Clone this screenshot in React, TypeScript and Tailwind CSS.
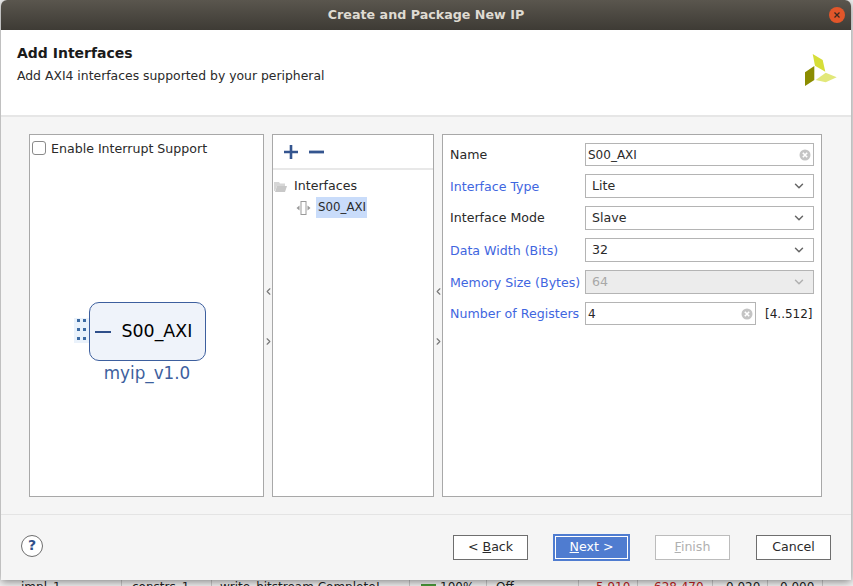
import React from 'react';
import { ChevronDown, ChevronLeft, ChevronRight } from 'lucide-react';

const font = { fontFamily: '"DejaVu Sans", sans-serif' };

function ClearIcon() {
  return (
    <svg width="12" height="12" viewBox="0 0 12 12" className="shrink-0">
      <circle cx="6" cy="6" r="5.5" fill="#c4c4c4" />
      <path d="M3.8 3.8l4.4 4.4M8.2 3.8l-4.4 4.4" stroke="#fff" strokeWidth="1.6" />
    </svg>
  );
}

function Logo() {
  return (
    <svg width="32" height="32" viewBox="0 0 32 32">
      <polygon points="7.7,0 17.7,6 20.3,17.7 10,11.7" fill="#d6de38" />
      <polygon points="9.3,12 9.3,26 0,32 0,18.3" fill="#8b8c00" />
      <polygon points="20.7,18.7 31.7,23.3 20.7,28.3 10.7,26" fill="#e2e87a" />
    </svg>
  );
}

function TextRow({ label, value, blue, narrow }: { label: string; value: string; blue?: boolean; narrow?: boolean }) {
  return (
    <div className="flex items-center h-[23px]">
      <span className={`w-[142px] pl-[7px] pt-[2px] whitespace-nowrap ${blue ? 'text-[#3f66e0]' : 'text-[#2a2a2a]'}`}>{label}</span>
      <div className={`h-[23px] flex items-center justify-between bg-white border border-[#b4b4b4] pl-[2px] pr-[2px] ${narrow ? 'w-[171px]' : 'w-[229px]'}`}>
        <span className="text-[12px]">{value}</span>
        <ClearIcon />
      </div>
      {narrow && <span className="ml-[9px] text-[12px] text-[#222]">[4..512]</span>}
    </div>
  );
}

function SelectRow({ label, value, blue, disabled }: { label: string; value: string; blue?: boolean; disabled?: boolean }) {
  return (
    <div className="flex items-center h-[24px]">
      <span className={`w-[142px] pl-[7px] whitespace-nowrap ${blue ? 'text-[#3f66e0] pt-[2px]' : 'text-[#2a2a2a]'}`}>{label}</span>
      <div className={`w-[229px] h-[24px] flex items-center justify-between border border-[#b4b4b4] pl-[6px] pr-[7px] ${disabled ? 'bg-[#ececec] text-[#a8a8a8]' : 'bg-white'}`}>
        <span>{value}</span>
        <ChevronDown size={14} strokeWidth={2.5} className={disabled ? 'text-[#b0b0b0]' : 'text-[#666]'} />
      </div>
    </div>
  );
}

function FooterButton({ children, kind }: { children: React.ReactNode; kind?: 'primary' | 'disabled' }) {
  if (kind === 'primary') {
    return (
      <div className="w-[77px] h-[27px] border-2 border-[#4f7cd0] bg-[#4f7cd0] flex items-center">
        <div className="w-full h-[23px] border border-white text-white flex items-center justify-center">{children}</div>
      </div>
    );
  }
  return (
    <div className={`w-[75px] h-[25px] bg-white border flex items-center justify-center ${kind === 'disabled' ? 'border-[#bcbcbc] text-[#b0b0b0]' : 'border-[#6e6e6e] text-[#2a2a2a]'}`}>
      {children}
    </div>
  );
}

function Splitter() {
  return (
    <div className="w-[8px] flex flex-col items-center shrink-0 text-[#777]">
      <ChevronLeft size={11} strokeWidth={2.5} className="mt-[152px] shrink-0" />
      <ChevronRight size={11} strokeWidth={2.5} className="mt-[39px] shrink-0" />
    </div>
  );
}

const behind = [
  { w: 'w-[122px] pl-[21px]', text: 'impl_1' },
  { w: 'w-[90px] pl-[10px]', text: 'constrs_1' },
  { w: 'w-[198px] pl-[8px]', text: 'write_bitstream Complete!' },
  { w: 'w-[77px] pl-[30px]', text: '100%' },
  { w: 'w-[92px] pl-[9px]', text: 'Off' },
  { w: 'w-[59px] pl-[17px] text-[#c02020]', text: '5.910' },
  { w: 'w-[75px] pl-[16px] text-[#c02020]', text: '628.470' },
  { w: 'w-[55px] pl-[13px]', text: '0.020' },
  { w: 'w-[55px] pl-[12px]', text: '0.000' },
];

export default function App() {
  return (
    <div className="w-[853px] h-[586px] overflow-hidden bg-[#f2f2f2] text-[12.6px] text-[#2a2a2a]" style={font}>
      <div className="relative z-10 ml-[1px] w-[850px] h-[580px] flex flex-col bg-[#f5f5f5] shadow-[0_2px_8px_rgba(0,0,0,0.45)] rounded-t-[6px]">
        {/* title bar */}
        <div className="h-[30px] shrink-0 flex items-center justify-center relative rounded-t-[6px] bg-gradient-to-b from-[#5a564e] to-[#3e3b35]">
          <span className="font-bold text-[#dfdbd2] text-[12.7px]">Create and Package New IP</span>
          <div className="absolute right-[6px] top-[7px] w-4 h-4 rounded-full bg-[#e2562a] flex items-center justify-center">
            <svg width="8" height="8" viewBox="0 0 8 8"><path d="M1.5 1.5l5 5M6.5 1.5l-5 5" stroke="#3c2a20" strokeWidth="1.3" /></svg>
          </div>
        </div>

        {/* header */}
        <div className="h-[87px] shrink-0 bg-white border-b-2 border-[#e6e6e6] flex justify-between pl-[16px] pr-[14px]">
          <div className="pt-[14px]">
            <div className="font-bold text-[14px] leading-[18px] text-[#1a1a1a]">Add Interfaces</div>
            <div className="mt-[6px] text-[12.4px] leading-[16px]">Add AXI4 interfaces supported by your peripheral</div>
          </div>
          <div className="pt-[24px]"><Logo /></div>
        </div>

        {/* panels */}
        <div className="flex-1 flex pl-[28px] pt-[17px] pb-[17px] border-b border-[#e4e4e4]">
          <div className="w-[235px] bg-white border border-[#a8a8a8] flex flex-col">
            <label className="flex items-center h-[26px] pl-[2px] gap-[5px]">
              <span className="w-[14px] h-[14px] rounded-[3px] border border-[#8a8a8a] bg-white" />
              <span className="pt-[2px]">Enable Interrupt Support</span>
            </label>
            <div className="flex-1 flex flex-col items-center pt-[141px] pl-[1px]">
              <div className="relative w-[117px] h-[59px] rounded-[10px] border border-[#3d5f9e] bg-[#eff3fa] flex items-center pl-[32px] text-[17.4px] text-black">
                <span className="absolute left-[5px] top-[28px] w-[16px] h-[2px] bg-[#2f4f8a]" />
                <div className="absolute left-[-16px] top-[15px] w-[15px] h-[25px] bg-[#eaf2fb] grid grid-cols-2 content-start gap-y-[6px] pl-[3px] pt-[1px]">
                  {[0, 1, 2, 3, 4, 5].map((i) => (
                    <span key={i} className="w-[3px] h-[3px] bg-[#3d6ba3]" />
                  ))}
                </div>
                S00_AXI
              </div>
              <div className="mt-[2px] text-[16.8px] leading-[20px] text-[#3d5f9e]">myip_v1.0</div>
            </div>
          </div>

          <Splitter />

          <div className="w-[162px] bg-white border border-[#a8a8a8] flex flex-col">
            <div className="h-[35px] border-b-2 border-[#e8e8e8] flex items-center pl-[10px] gap-[10px]">
              <svg width="16" height="16" viewBox="0 0 16 16"><path d="M8 1v14M1 8h14" stroke="#34558f" strokeWidth="2.6" /></svg>
              <svg width="15" height="16" viewBox="0 0 15 16"><path d="M0 8h15" stroke="#34558f" strokeWidth="2.8" /></svg>
            </div>
            <div className="flex items-center h-[20px] mt-[6px]">
              <svg width="13" height="11" viewBox="0 0 13 11" className="ml-[1px]">
                <path d="M0 1h5l1 1.5h5V5H3L1 10H0z" fill="#d6d6d6" />
                <path d="M3 5h10l-2 6H1z" fill="#c8c8c8" />
              </svg>
              <span className="ml-[7px]">Interfaces</span>
            </div>
            <div className="flex items-center h-[21px] mt-[1px] ml-[23px]">
              <svg width="15" height="14" viewBox="0 0 15 14">
                <rect x="5" y="0.5" width="5" height="13" fill="#fff" stroke="#9a9a9a" />
                <path d="M3.5 4.5v5L0.5 7zM11.5 4.5v5L14.5 7z" fill="#9a9a9a" />
              </svg>
              <span className="ml-[5px] h-[21px] leading-[21px] pl-[2px] pr-[1px] bg-[#c9dcfa] text-[11.8px]">S00_AXI</span>
            </div>
          </div>

          <Splitter />

          <div className="w-[380px] bg-white border border-[#a8a8a8] flex flex-col pt-[8px] gap-[8px]">
            <TextRow label="Name" value="S00_AXI" />
            <SelectRow label="Interface Type" value="Lite" blue />
            <SelectRow label="Interface Mode" value="Slave" />
            <SelectRow label="Data Width (Bits)" value="32" blue />
            <SelectRow label="Memory Size (Bytes)" value="64" blue disabled />
            <TextRow label="Number of Registers" value="4" blue narrow />
          </div>
        </div>

        {/* footer */}
        <div className="h-[65px] shrink-0 flex items-center pl-[20px] pr-[20px] pb-[1px]">
          <div className="w-[22px] h-[22px] mb-[3px] rounded-full border border-[#6e6e6e] bg-white flex items-center justify-center font-bold text-[14px] text-[#2f4f8a]">?</div>
          <div className="ml-auto flex items-center">
            <FooterButton><span>&lt; <u>B</u>ack</span></FooterButton>
            <div className="ml-[25px]"><FooterButton kind="primary"><span><u>N</u>ext &gt;</span></FooterButton></div>
            <div className="ml-[25px]"><FooterButton kind="disabled"><span><u>F</u>inish</span></FooterButton></div>
            <div className="ml-[26px]"><FooterButton>Cancel</FooterButton></div>
          </div>
        </div>
      </div>

      {/* window behind the dialog */}
      <div className="flex h-[6px] items-start text-[12px] leading-[14px] whitespace-nowrap text-[#222]">
        {behind.map((c) => (
          <div key={c.text} className={`${c.w} h-[6px] shrink-0 border-r border-[#c8c8c8] ${c.text === '100%' ? 'relative' : ''}`}>
            {c.text}
            {c.text === '100%' && <span className="absolute left-[11px] top-[4px] w-[15px] h-[2px] bg-[#4a9a3a]" />}
          </div>
        ))}
      </div>
    </div>
  );
}
